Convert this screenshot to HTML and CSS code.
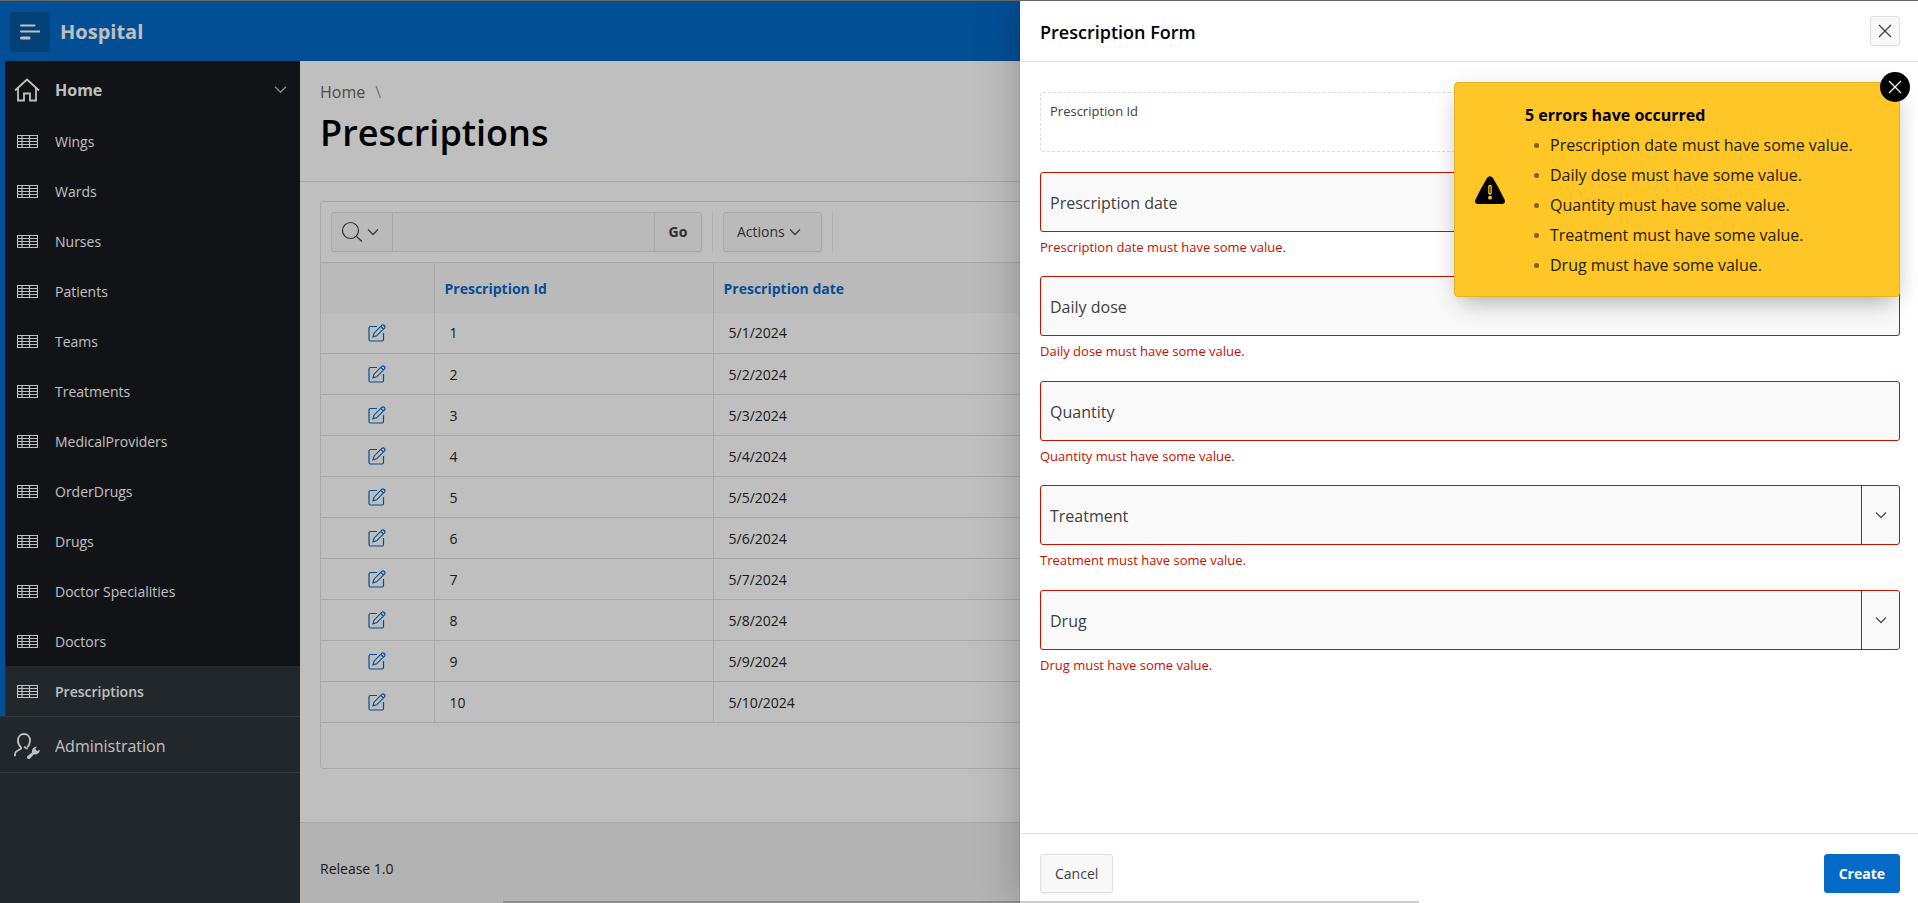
FILE: index.html
```html
<!DOCTYPE html>
<html lang="en">
<head>
<meta charset="utf-8">
<title>Prescriptions</title>
<link rel="stylesheet" href="styles.css">
</head>
<body>
<svg class="sprite" aria-hidden="true">
  <symbol id="i-table" viewBox="0 0 21 13"><path d="M.5 .5h20v12H.5zM.5 3.5h20M.5 6.5h20M.5 9.5h20M5 .5v12M12.500 .5v12" fill="none" stroke="currentColor" stroke-width="1.200"/></symbol>
  <symbol id="i-chevron" viewBox="0 0 12 8"><path d="M1 1.5l5 5 5-5" fill="none" stroke="currentColor" stroke-width="1.3"/></symbol>
  <symbol id="i-x" viewBox="0 0 14 14"><path d="M1 1l12 12M13 1L1 13" fill="none" stroke="currentColor" stroke-width="1.3"/></symbol>
  <symbol id="i-edit" viewBox="0 0 18 18"><path d="M9 2.500H2.500a1.500 1.500 0 0 0-1.500 1.500v11.500A1.500 1.500 0 0 0 2.500 17H14a1.500 1.500 0 0 0 1.500-1.500V9M5 12.800l1-3.600 8-8q1.200-.8 2.300.3t.3 2.300l-8 8zM12.800 2.400l2.600 2.600" fill="none" stroke="currentColor" stroke-width="1.200"/></symbol>
</svg>
<div class="page">
  <header class="topbar">
    <button class="menu-btn" type="button" aria-label="Toggle navigation"><svg width="20" height="16" viewBox="0 0 20 16"><path d="M1 1.500h13.500M1 7.500h18.500" stroke="currentColor" stroke-width="2" stroke-linecap="round"/><path d="M1.500 14h7.500" stroke="currentColor" stroke-width="3" stroke-linecap="round"/></svg></button>
    <a class="brand" href="#">Hospital</a>
  </header>
  <div class="shell">
    <nav class="sidebar">
      <div class="group">
        <a class="top-item strong" href="#">
          <svg class="ico-lg" viewBox="0 0 26 24"><path d="M1 12.500L13 1.500l12 11M4 10v12.500h6v-7h6v7h6V10" fill="none" stroke="currentColor" stroke-width="1.800"/></svg>
          <span>Home</span><svg class="chev"><use href="#i-chevron"/></svg>
        </a>
        <a class="item" href="#"><svg><use href="#i-table"/></svg>Wings</a>
        <a class="item" href="#"><svg><use href="#i-table"/></svg>Wards</a>
        <a class="item" href="#"><svg><use href="#i-table"/></svg>Nurses</a>
        <a class="item" href="#"><svg><use href="#i-table"/></svg>Patients</a>
        <a class="item" href="#"><svg><use href="#i-table"/></svg>Teams</a>
        <a class="item" href="#"><svg><use href="#i-table"/></svg>Treatments</a>
        <a class="item" href="#"><svg><use href="#i-table"/></svg>MedicalProviders</a>
        <a class="item" href="#"><svg><use href="#i-table"/></svg>OrderDrugs</a>
        <a class="item" href="#"><svg><use href="#i-table"/></svg>Drugs</a>
        <a class="item" href="#"><svg><use href="#i-table"/></svg>Doctor Specialities</a>
        <a class="item" href="#"><svg><use href="#i-table"/></svg>Doctors</a>
        <a class="item current" href="#" aria-current="page"><svg><use href="#i-table"/></svg>Prescriptions</a>
      </div>
      <a class="top-item admin" href="#">
        <svg class="ico-lg" viewBox="0 0 26 26"><path d="M7 14.500Q4 11.500 4 7.500C4 3.500 6.500 1 10 1s6 2.500 6 6.500q0 4-2.800 6.800M7 14v1.800L3 18Q1 19 1 21.500v1.800" fill="none" stroke="currentColor" stroke-width="1.800"/><path d="M10 13.800l3.500 2.200" fill="none" stroke="currentColor" stroke-width="1.700"/><path d="M23 13.500a5 5 0 0 0-5 6l-4.200 3.300a1.800 1.800 0 1 0 2.500 2.500L20 21.300a5 5 0 0 0 6-4.500l-2.800 1.200-2-2z" fill="currentColor"/></svg>
        <span>Administration</span>
      </a>
    </nav>
    <div class="content">
      <main class="main">
        <div class="title-bar">
          <div class="crumbs"><a href="#">Home</a><span class="slash">\</span></div>
          <h1>Prescriptions</h1>
        </div>
        <section class="report">
          <div class="toolbar">
            <div class="search">
              <button class="search-btn" type="button" aria-label="Select columns to search"><svg width="22" height="22" viewBox="0 0 22 22"><circle cx="9.500" cy="9.500" r="8" fill="none" stroke="currentColor" stroke-width="1.200"/><path d="M15.500 15.500l5.500 5" stroke="currentColor" stroke-width="1.200"/></svg><svg class="chev-sm"><use href="#i-chevron"/></svg></button>
              <input type="text" aria-label="Search report">
              <button class="go" type="button">Go</button>
            </div>
            <div class="actions"><button type="button">Actions<svg class="chev-sm"><use href="#i-chevron"/></svg></button></div>
          </div>
          <table>
            <thead><tr><th class="c-edit"></th><th class="c-id"><a href="#">Prescription Id</a></th><th><a href="#">Prescription date</a></th></tr></thead>
            <tbody>
              <tr><td><a href="#" aria-label="Edit"><svg><use href="#i-edit"/></svg></a></td><td>1</td><td>5/1/2024</td></tr>
              <tr><td><a href="#" aria-label="Edit"><svg><use href="#i-edit"/></svg></a></td><td>2</td><td>5/2/2024</td></tr>
              <tr><td><a href="#" aria-label="Edit"><svg><use href="#i-edit"/></svg></a></td><td>3</td><td>5/3/2024</td></tr>
              <tr><td><a href="#" aria-label="Edit"><svg><use href="#i-edit"/></svg></a></td><td>4</td><td>5/4/2024</td></tr>
              <tr><td><a href="#" aria-label="Edit"><svg><use href="#i-edit"/></svg></a></td><td>5</td><td>5/5/2024</td></tr>
              <tr><td><a href="#" aria-label="Edit"><svg><use href="#i-edit"/></svg></a></td><td>6</td><td>5/6/2024</td></tr>
              <tr><td><a href="#" aria-label="Edit"><svg><use href="#i-edit"/></svg></a></td><td>7</td><td>5/7/2024</td></tr>
              <tr><td><a href="#" aria-label="Edit"><svg><use href="#i-edit"/></svg></a></td><td>8</td><td>5/8/2024</td></tr>
              <tr><td><a href="#" aria-label="Edit"><svg><use href="#i-edit"/></svg></a></td><td>9</td><td>5/9/2024</td></tr>
              <tr><td><a href="#" aria-label="Edit"><svg><use href="#i-edit"/></svg></a></td><td>10</td><td>5/10/2024</td></tr>
            </tbody>
          </table>
          <div class="pager"></div>
        </section>
      </main>
      <footer class="footer">Release 1.0</footer>
    </div>
  </div>
</div>
<div class="overlay"></div>
<form class="drawer" role="dialog" aria-labelledby="dlg-title">
  <div class="drawer-head">
    <h2 id="dlg-title">Prescription Form</h2>
    <button class="btn close" type="button" aria-label="Close"><svg width="14" height="14"><use href="#i-x"/></svg></button>
  </div>
  <div class="drawer-body">
    <div class="readonly"><label for="f-id">Prescription Id</label><input id="f-id" type="text" readonly></div>
    <div class="field">
      <div class="box"><label for="f-date">Prescription date</label><input id="f-date" type="text"></div>
      <p class="error">Prescription date must have some value.</p>
    </div>
    <div class="field">
      <div class="box"><label for="f-dose">Daily dose</label><input id="f-dose" type="text"></div>
      <p class="error">Daily dose must have some value.</p>
    </div>
    <div class="field">
      <div class="box"><label for="f-qty">Quantity</label><input id="f-qty" type="text"></div>
      <p class="error">Quantity must have some value.</p>
    </div>
    <div class="field">
      <div class="box"><label for="f-treat">Treatment</label><input id="f-treat" type="text"><button type="button" aria-label="Open treatments"><svg class="chev-sm"><use href="#i-chevron"/></svg></button></div>
      <p class="error">Treatment must have some value.</p>
    </div>
    <div class="field">
      <div class="box"><label for="f-drug">Drug</label><input id="f-drug" type="text"><button type="button" aria-label="Open drugs"><svg class="chev-sm"><use href="#i-chevron"/></svg></button></div>
      <p class="error">Drug must have some value.</p>
    </div>
  </div>
  <div class="drawer-foot">
    <button class="btn" type="button">Cancel</button>
    <button class="btn primary" type="submit">Create</button>
  </div>
  <div class="alert" role="alert">
    <svg class="warn" viewBox="0 0 30 28"><path d="M12 2Q15-1.500 18 2q6 10 11.500 21.500Q31 27.500 27 28H3Q-1 27.500.5 23.500 6 12 12 2z"/><path d="M15 10.500v6.500" stroke="#ffc628" stroke-width="3.600" stroke-linecap="round"/><path d="M15 10.500v6.500" stroke="#000" stroke-width="1"/><circle cx="15" cy="21.700" r="1.900" fill="#ffc628"/></svg>
    <div>
      <h3>5 errors have occurred</h3>
      <ul>
        <li>Prescription date must have some value.</li>
        <li>Daily dose must have some value.</li>
        <li>Quantity must have some value.</li>
        <li>Treatment must have some value.</li>
        <li>Drug must have some value.</li>
      </ul>
    </div>
    <button class="alert-close" type="button" aria-label="Dismiss"><svg width="14" height="14"><use href="#i-x"/></svg></button>
  </div>
</form>
<div class="scroll-thumb"></div>
</body>
</html>
```
FILE: styles.css
```css
* { box-sizing: border-box; }
body {
  margin: 0;
  position: relative;
  min-height: 100vh;
  border-top: 1px solid #666;
  font: 14px/20px "Open Sans", "Noto Sans", sans-serif;
  color: #262626;
  overflow: hidden;
}
a { color: inherit; text-decoration: none; }
h1, h2, h3, p, ul { margin: 0; padding: 0; }
button, input { font: inherit; color: inherit; margin: 0; }
.sprite { position: absolute; width: 0; height: 0; }

.page { display: flex; flex-direction: column; min-height: calc(100vh - 1px); }
.topbar {
  display: flex;
  align-items: center;
  gap: 10px;
  height: 60px;
  padding: 2px 10px 0;
  background: #056ac8;
  border-bottom: 1px solid #0460b4;
  color: #fff;
}
.menu-btn {
  display: grid;
  place-items: center;
  width: 40px;
  height: 40px;
  padding: 0;
  border: 0;
  border-radius: 3px;
  background: #04589f;
}
.brand { font-size: 20px; font-weight: 700; line-height: 24px; }

.shell { display: flex; flex: 1; }
.sidebar { flex: 0 0 300px; background: #2d343a; color: #fff; }
.group { border-left: 5px solid #056ac8; background: #181a1f; }
.top-item { display: flex; align-items: center; height: 55px; padding: 2px 13px 0 9px; font-size: 16px; }
.top-item span { flex: 1; }
.strong { font-weight: 700; }
.ico-lg { width: 26px; height: 26px; margin-right: 15px; }
.chev { width: 13px; height: 9px; opacity: .7; }
.admin { height: 57px; padding-left: 14px; border: solid #434a50; border-width: 1px 0; }
.item { display: flex; align-items: center; gap: 17px; height: 50px; padding: 1px 0 0 12px; }
.item svg { width: 21px; height: 13px; }
.current { background: #2d343a; font-weight: 600; }

.content { flex: 1; min-width: 0; display: flex; flex-direction: column; }
.main { flex: 1; }
.title-bar { padding: 19px 20px 24px; border-bottom: 1px solid #e0e0e0; }
.crumbs { display: flex; gap: 10px; font-size: 16px; line-height: 24px; color: #666; }
.slash { color: #999; }
h1 { font-size: 36px; font-weight: 600; line-height: 48px; margin-top: 5px; color: #000; }

.report { margin: 19px 20px 0; border: 1px solid #e0e0e0; border-radius: 3px; }
.toolbar { display: flex; gap: 10px; padding: 10px; }
.toolbar button { display: flex; align-items: center; gap: 4px; background: #f8f8f8; border: 1px solid #e0e0e0; color: #404040; padding: 0; box-shadow: 0 2px 2px rgba(0, 0, 0, .03); }
.search { display: flex; height: 40px; }
.toolbar .search-btn { width: 62px; padding-left: 9px; border-radius: 3px 0 0 3px; }
.search input { width: 261px; border: solid #e0e0e0; border-width: 1px 0; background: #f9f9f9; }
.toolbar .go { width: 48px; justify-content: center; font-weight: 700; border-radius: 0 3px 3px 0; }
.actions { border: solid #e8e8e8; border-width: 0 1px; padding: 0 10px; display: flex; }
.toolbar .actions button { width: 99px; padding-left: 13px; border-radius: 3px; }
.chev-sm { width: 12px; height: 8px; color: #505050; }

table { width: 100%; table-layout: fixed; border-collapse: collapse; border-top: 1px solid #e0e0e0; }
th { height: 50px; padding: 2px 10px 0; background: #f9f9f9; text-align: left; color: #056ac8; font-weight: 700; }
.c-edit { width: 113px; }
.c-id { width: 279px; }
td { height: 41px; padding: 1px 15px 0; border-bottom: 1px solid #e0e0e0; }
th + th, td + td { border-left: 1px solid #e0e0e0; }
td:first-child { padding: 0; text-align: center; }
td svg { display: block; width: 18px; height: 18px; margin: 0 auto; color: #056ac8; }
.pager { height: 45px; }
.footer { height: 81px; padding: 36px 20px 0; border-top: 1px solid #e0e0e0; background: #efefef; }

.overlay { position: absolute; inset: 0; background: rgba(0, 0, 0, .25); }

.drawer {
  position: absolute;
  top: 0;
  right: 0;
  bottom: 0;
  width: 898px;
  display: flex;
  flex-direction: column;
  background: #fff;
  box-shadow: 0 0 40px rgba(0, 0, 0, .25), 0 0 1px rgba(0, 0, 0, .4);
}
.drawer-head { display: flex; align-items: center; justify-content: space-between; height: 61px; padding: 0 18px 0 20px; border-bottom: 1px solid #e0e0e0; }
h2 { padding-top: 2px; font-size: 18px; font-weight: 600; line-height: 24px; color: #000; }
.btn { height: 39px; padding: 0 14px; border: 1px solid #e0e0e0; border-radius: 3px; background: #f8f8f8; color: #404040; box-shadow: 0 2px 2px rgba(0, 0, 0, .03); }
.close { display: grid; place-items: center; width: 30px; height: 30px; padding: 0; }
.primary { background: #056ac8; border-color: #056ac8; color: #fff; font-weight: 700; }
.drawer-body { flex: 1; padding: 30px 18px 0 20px; }
.readonly { display: flex; flex-direction: column; height: 60px; margin-bottom: 20px; padding: 8px 9px; border: 1px dashed #dcdcdc; border-radius: 3px; }
.readonly label { font-size: 13px; color: #404040; }
.readonly input { flex: 1; min-height: 0; width: 100%; padding: 0; border: 0; background: none; outline: none; }
.field { height: 104px; }
.field:nth-child(n + 4) { margin-top: 1px; }
.field:nth-child(5) { margin-top: 0; }
.box { position: relative; display: flex; height: 60px; border: 1px solid #c80f00; border-radius: 3px; background: #f9f9f9; overflow: hidden; }
.box label { position: absolute; left: 9px; top: 18px; font-size: 16px; line-height: 24px; color: #404040; }
.box input { flex: 1; min-width: 0; border: 0; padding: 20px 9px 0; background: none; outline: none; }
.box button { display: grid; place-items: center; width: 38px; padding: 0; border: 0; border-left: 1px solid #c80f00; background: none; }
.error { padding-top: 5px; font-size: 13px; line-height: 20px; color: #c80f00; }
.drawer-foot { display: flex; justify-content: space-between; height: 70px; padding: 20px 18px 0 20px; border-top: 1px solid #e0e0e0; }

.alert {
  position: absolute;
  top: 81px;
  right: 18px;
  display: flex;
  align-items: center;
  gap: 20px;
  width: 446px;
  padding: 17px 20px 16px;
  border: 1px solid #e5b224;
  border-radius: 4px;
  background: #ffc628;
  color: #262000;
  font-size: 16px;
  line-height: 30px;
  box-shadow: 0 12px 24px -8px rgba(0, 0, 0, .3), 0 0 24px rgba(0, 0, 0, .06);
}
.warn { flex: none; width: 30px; height: 28px; }
h3 { font-size: 16px; font-weight: 700; line-height: 30px; color: #000; }
ul { list-style: none; }
li { display: flex; align-items: center; gap: 11px; padding-left: 9px; }
li::before { content: ""; width: 5px; height: 5px; border-radius: 50%; background: #7f6314; }
.alert-close { position: absolute; top: -11px; right: -11px; display: grid; place-items: center; width: 30px; height: 30px; padding: 0; border: 0; border-radius: 50%; background: #000; color: #fff; }
.scroll-thumb { position: absolute; left: 26.2%; bottom: 0; width: 47.8%; height: 2px; background: rgba(0, 0, 0, .2); }
```
